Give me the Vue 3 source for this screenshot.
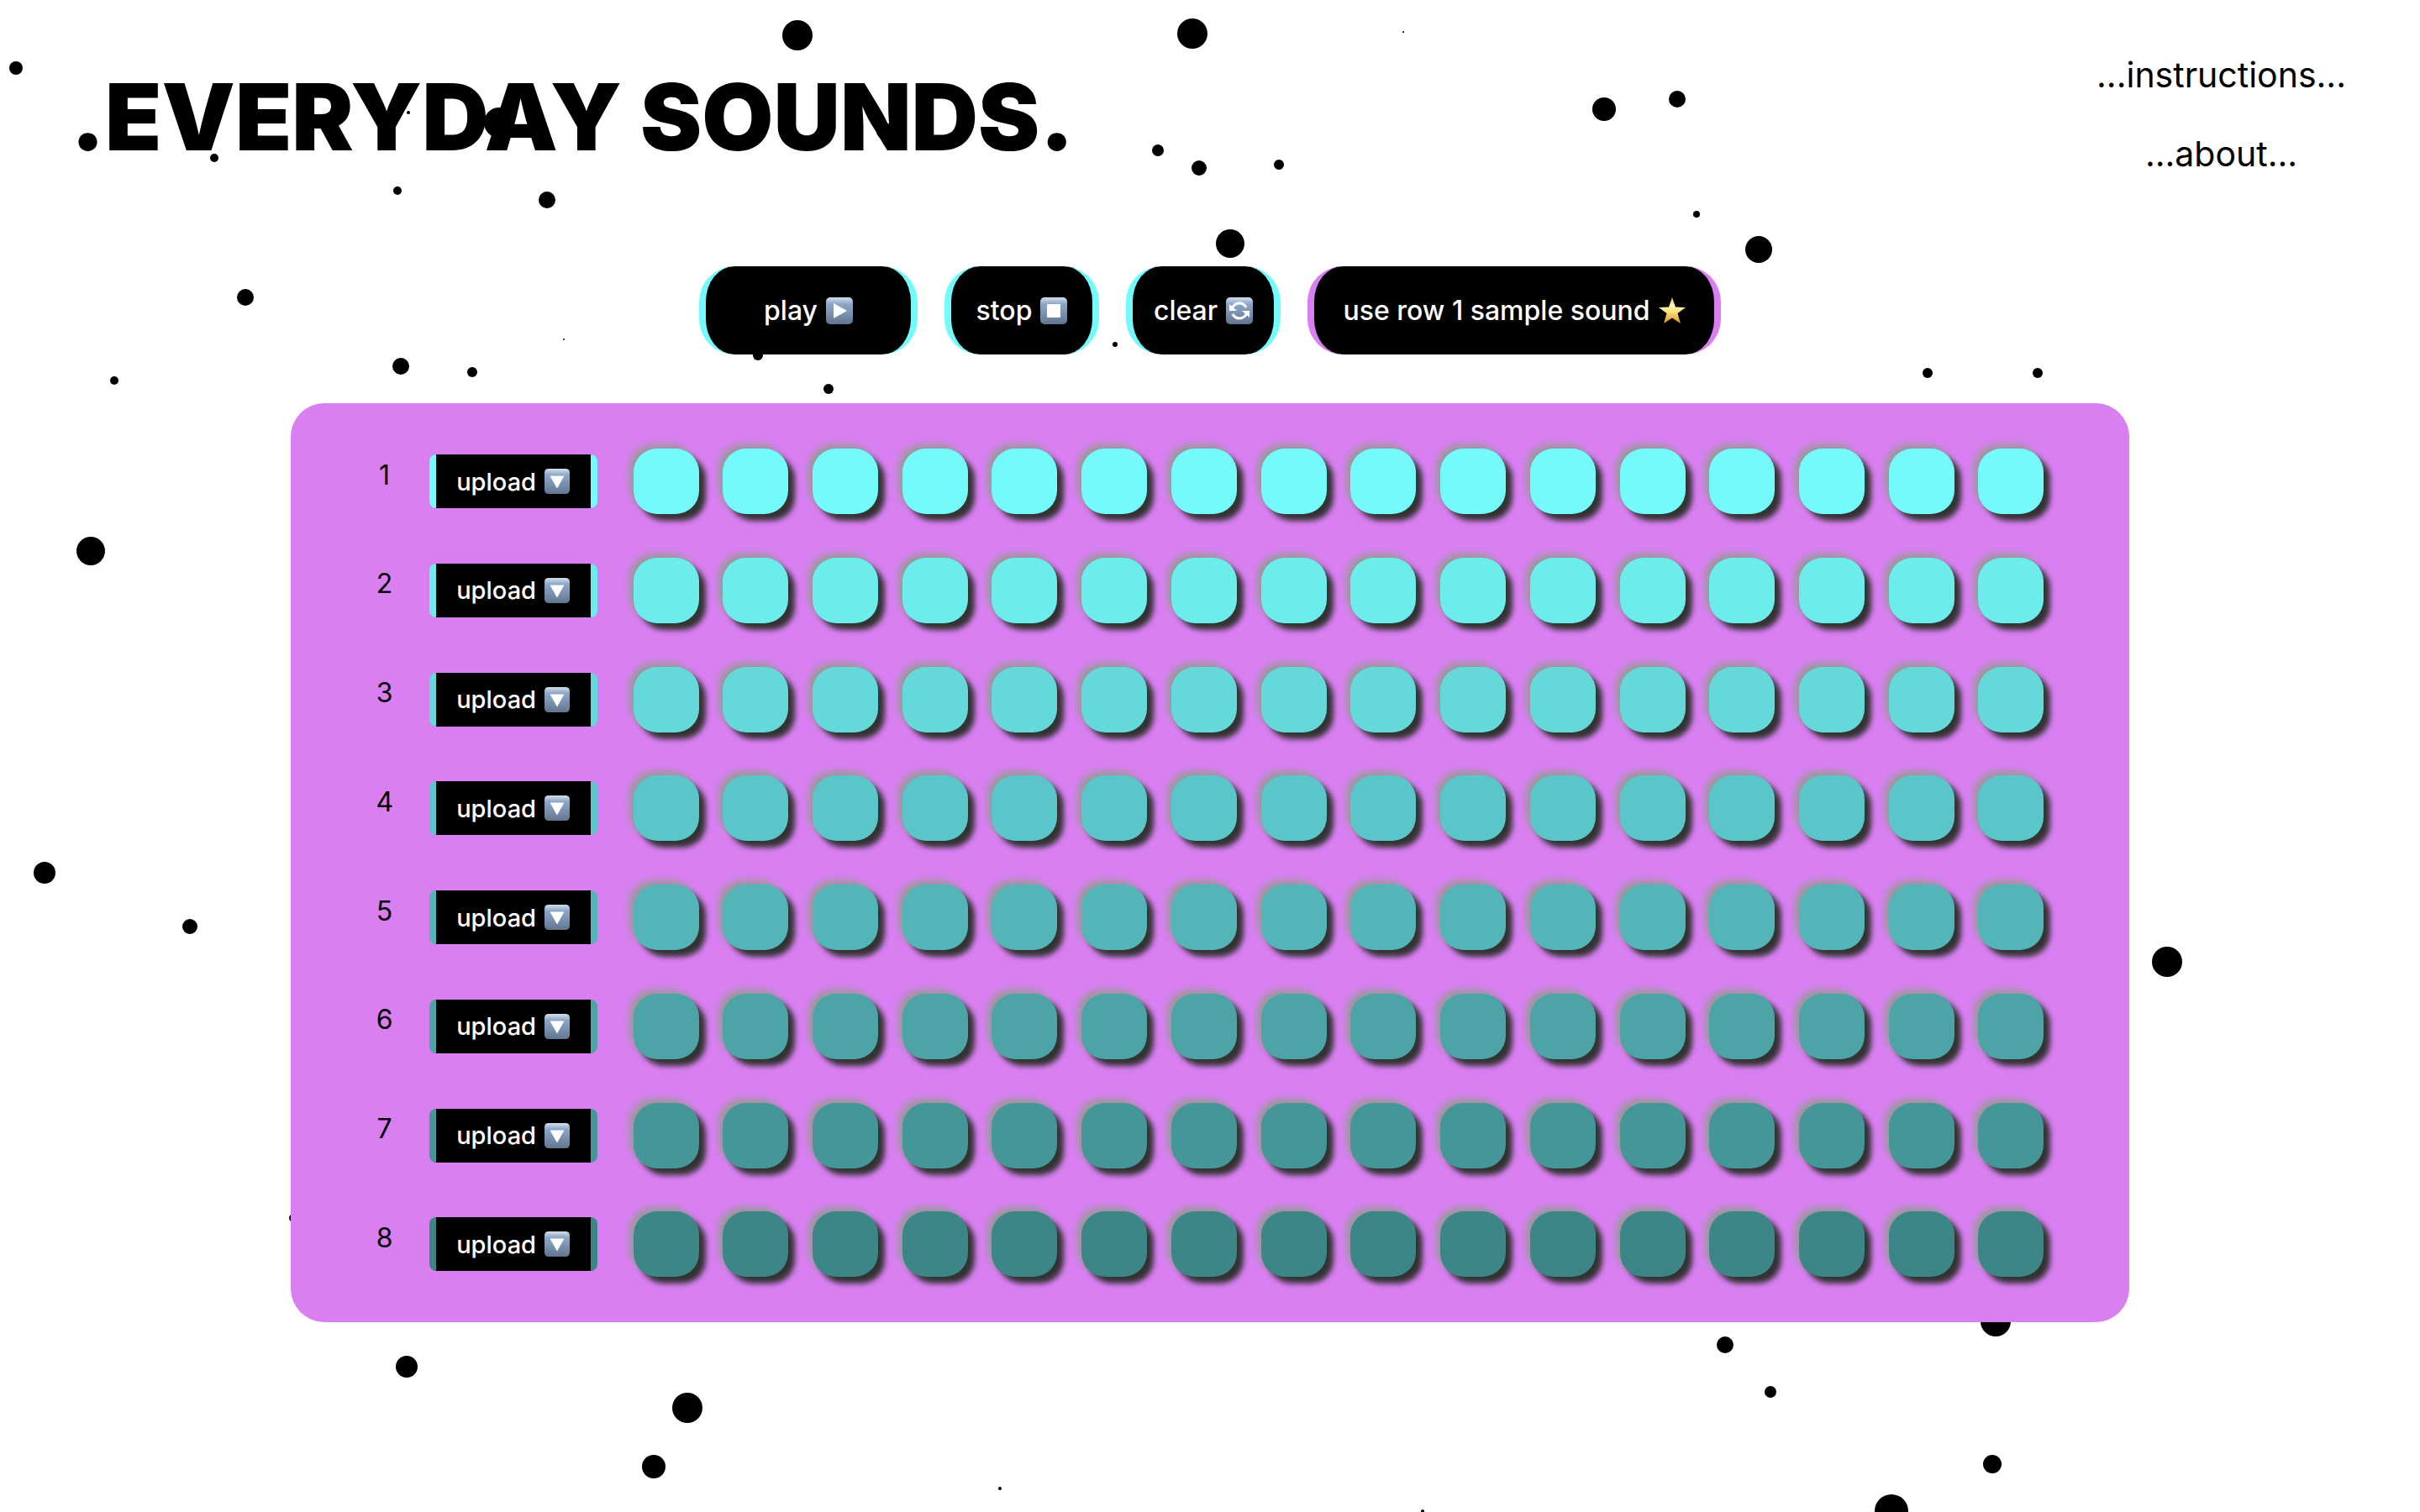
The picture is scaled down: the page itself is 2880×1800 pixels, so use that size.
<script setup>
import { ref } from 'vue'

const transport = [
  { id: 'play', label: 'play', icon: 'play' },
  { id: 'stop', label: 'stop', icon: 'stop' },
  { id: 'clear', label: 'clear', icon: 'repeat' },
  { id: 'sample', label: 'use row 1 sample sound', icon: 'star' },
]

const shades = ['#75fafb', '#6decec', '#65d9d9', '#5bc6c9', '#54b5b9', '#4ca4a6', '#449698', '#3c8688']
const steps = ref(shades.map(() => Array(16).fill(false)))

// x, y, radius on a 2880 x 1800 field
const dots = [
  [949, 42, 18], [1419, 40, 18], [19, 81, 8], [255, 188, 5], [473, 227, 5], [651, 238, 10],
  [486, 134, 2], [594, 146, 18], [1053, 156, 10], [1378, 179, 7], [1427, 200, 9], [292, 354, 10],
  [671, 404, 1], [477, 436, 10], [562, 443, 6], [136, 453, 5], [902, 423, 6], [1327, 410, 3],
  [986, 463, 6], [1670, 38, 1], [1909, 130, 14], [1996, 118, 10], [1522, 196, 6], [2019, 255, 4],
  [1464, 290, 17], [2093, 297, 16], [2294, 444, 6], [2425, 444, 6], [108, 656, 17], [53, 1039, 13],
  [226, 1103, 9], [349, 1450, 5], [484, 1627, 13], [818, 1676, 18], [778, 1746, 14], [1190, 1772, 2],
  [2579, 1145, 18], [2375, 1573, 18], [2053, 1601, 10], [2107, 1657, 7], [2371, 1743, 11],
  [2251, 1799, 20], [1693, 1799, 2],
]
</script>

<template>
  <div class="page">
    <svg class="dots" viewBox="0 0 2880 1800" aria-hidden="true">
      <circle v-for="(d, i) in dots" :key="i" :cx="d[0]" :cy="d[1]" :r="d[2]" />
    </svg>
    <svg class="defs" width="0" height="0" aria-hidden="true">
      <linearGradient id="tile" x1="0" y1="0" x2="0" y2="1">
        <stop offset="0" stop-color="#d3e0ec" />
        <stop offset="0.25" stop-color="#8ba6c6" />
        <stop offset="0.5" stop-color="#7f98b8" />
        <stop offset="1" stop-color="#63758f" />
      </linearGradient>
      <linearGradient id="gold" x1="0" y1="0" x2="0" y2="1">
        <stop offset="0" stop-color="#e9b84a" />
        <stop offset="0.3" stop-color="#fff3b4" />
        <stop offset="0.55" stop-color="#fae27c" />
        <stop offset="1" stop-color="#d9922b" />
      </linearGradient>
    </svg>

    <header class="top">
      <h1>.EVERYDAY SOUNDS.</h1>
      <nav>
        <a href="#instructions">...instructions...</a>
        <a href="#about">...about...</a>
      </nav>
    </header>

    <main>
      <div class="controls">
        <button v-for="b in transport" :key="b.id" type="button" :class="['control', b.id]">
          <span>{{ b.label }}</span>
          <svg class="icon" viewBox="0 0 32 32" aria-hidden="true">
            <rect v-if="b.icon !== 'star'" width="32" height="32" rx="5" fill="url(#tile)" />
            <path v-if="b.icon === 'play'" d="M9 7 25 16 9 25Z" fill="#fff" />
            <rect v-else-if="b.icon === 'stop'" x="8" y="8" width="16" height="16" rx="1" fill="#fff" />
            <g v-else-if="b.icon === 'repeat'">
              <path d="M7.500 13A9 9 0 0 1 24 12M24.500 19A9 9 0 0 1 8 20" fill="none" stroke="#fff" stroke-width="3" />
              <path d="M4 8V16H13ZM28 24V16H19Z" fill="#fff" />
            </g>
            <path v-else d="M16 0 20 11.500 32 12 22.500 19 26 31 16 24.500 6 31 9.500 19 0 12 12 11.500Z" fill="url(#gold)" />
          </svg>
        </button>
      </div>

      <section class="board">
        <div v-for="(shade, r) in shades" :key="r" class="row" :style="{ '--shade': shade }">
          <span class="number">{{ r + 1 }}</span>
          <button type="button" class="upload">
            <span>upload</span>
            <svg class="icon" viewBox="0 0 32 32" aria-hidden="true">
              <rect width="32" height="32" rx="5" fill="url(#tile)" />
              <path d="M7 9H25L16 25Z" fill="#fff" />
            </svg>
          </button>
          <div class="pads">
            <button
              v-for="(on, s) in steps[r]"
              :key="s"
              type="button"
              class="pad"
              :aria-label="`row ${r + 1} step ${s + 1}`"
              :aria-pressed="on"
              @click="steps[r][s] = !on"
            ></button>
          </div>
        </div>
      </section>
    </main>
  </div>
</template>

<style>
body {
  background: #fff;
  overflow: hidden;
}
</style>

<style scoped>
.page {
  position: relative;
  min-height: 100vh;
  font-family: Inter, sans-serif;
  color: #000;
}
.dots {
  position: absolute;
  top: 0;
  left: 0;
  width: 100%;
}
.defs {
  position: absolute;
}
.top {
  position: relative;
  display: flex;
  justify-content: space-between;
  padding: 64px 88px 0 84px;
  height: 253px;
}
h1 {
  margin: 0;
  font-size: 110px;
  line-height: 150px;
  font-weight: 900;
}
nav {
  display: flex;
  flex-direction: column;
  align-items: center;
  gap: 44px;
}
nav a {
  font-size: 41px;
  line-height: 50px;
  color: #000;
  text-decoration: none;
}
main {
  position: relative;
}
.controls {
  display: flex;
  justify-content: center;
  gap: 32px;
}
.control,
.upload {
  display: flex;
  align-items: center;
  justify-content: center;
  gap: 10px;
  padding: 0;
  border: 0 solid #75fafb;
  border-width: 0 8px;
  background: #000;
  color: #fff;
  font-family: inherit;
  font-weight: 500;
  white-space: nowrap;
}
.control {
  width: 184px;
  height: 105px;
  border-radius: 42px;
  font-size: 32px;
}
.control.play {
  width: 260px;
}
.control.sample {
  width: 492px;
  border-color: #d97ff2;
}
.control .icon {
  width: 32px;
  height: 32px;
}
.board {
  display: flex;
  flex-direction: column;
  justify-content: space-between;
  box-sizing: border-box;
  width: 76%;
  aspect-ratio: 2;
  margin: 58px auto 0;
  padding: 54px 102px;
  border-radius: 40px;
  background: #d97ff2;
}
.row {
  display: flex;
  align-items: center;
  gap: 43px;
}
.number {
  width: 20px;
  padding-bottom: 16px;
  font-size: 32px;
  text-align: center;
}
.upload {
  width: 200px;
  height: 64px;
  border-color: var(--shade);
  border-radius: 8px;
  font-size: 29px;
}
.upload .icon {
  width: 30px;
  height: 30px;
}
.pads {
  display: flex;
  flex: 1;
  justify-content: space-between;
}
.pad {
  width: 78px;
  height: 78px;
  padding: 0;
  border: 0;
  border-radius: 28px;
  background: var(--shade);
  box-shadow: 8px 8px 6px #333, -5px -5px 8px #999;
}
</style>
